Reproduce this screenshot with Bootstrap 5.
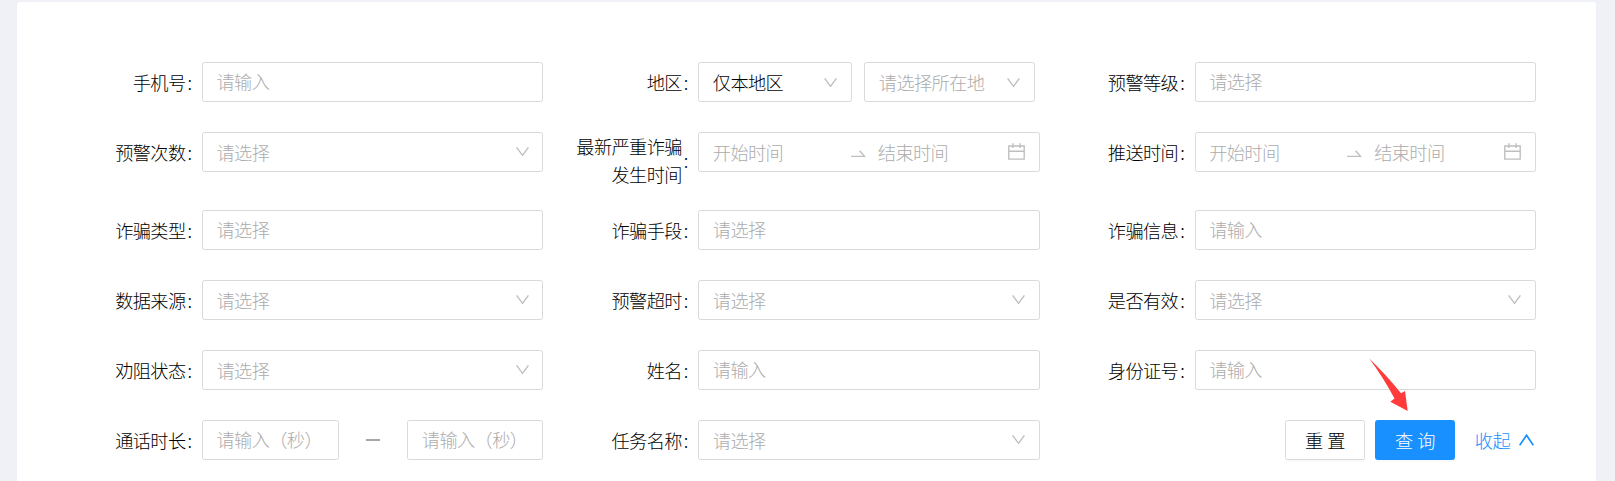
<!DOCTYPE html>
<html lang="zh-CN">
<head>
<meta charset="utf-8">
<meta name="viewport" content="width=device-width, initial-scale=1">
<title>预警查询</title>
<link href="https://cdn.jsdelivr.net/npm/bootstrap@5.3.0/dist/css/bootstrap.min.css" rel="stylesheet">
<style>
  body { background: #f0f1f6; font-family: "Noto Sans CJK SC", sans-serif; font-weight: 300; font-size: 18.2px; letter-spacing: -.6px; line-height: 28px; color: #000; overflow: hidden; }
  .panel { margin: 2px 19px 0 17px; padding: 60px 30px 0; height: 479px; border-radius: 3px 3px 0 0; }
  .search-grid { width: 1489px; row-gap: 30px; }
  .item-label { width: 155px; flex: none; height: 40px; padding-right: 8px; }
  .item-label.two-line { height: 48px; padding-top: 7px; }
  .item-label .colon { width: 8.5px; padding-left: 2px; }
  .form-control { height: 40px; padding: 0 14px 0 13.5px; border: 1px solid #d9d9d9; border-radius: 2.5px; font: inherit; color: #acacac; line-height: 37px; white-space: nowrap; }
  .form-control.chosen { color: #000; }
  .chev { width: 13px; height: 9px; flex: none; color: #bfbfbf; }
  .form-control.tall-select .chev { margin-bottom: 2px; }
  .col-start .tall-select .chev { margin-right: -1px; }
  .form-control svg, .fold svg { fill: none; stroke: currentColor; stroke-width: 1.4; }
  .w-region { width: 154px; }
  .w-place { width: 171px; }
  .date-start { width: 138px; }
  .date-arrow { width: 15px; height: 8px; margin: 4px 12px 0 0; color: #bfbfbf; }
  .cal { width: 17px; height: 17px; margin-bottom: 1px; color: #bfbfbf; }
  .w-sec { width: 137px; }
  .w-sec-end { width: 136px; }
  .tilde { width: 14px; height: 1.5px; background: #a6a6a6; }
  .btn { --bs-btn-font-size: 18.2px; --bs-btn-font-weight: 300; width: 80px; height: 40px; padding: 0; border-radius: 2.5px; line-height: 37px; letter-spacing: 4px; text-indent: 4px; box-shadow: 0 2px 0 rgba(0,0,0,.02); }
  .btn-reset { border-color: #d9d9d9; background: #fff; color: #000; }
  .btn-query { border-color: #1890ff; background: #1890ff; color: #fff; }
  .fold { color: #1890ff; margin: 0 2px 0 19.5px; }
  .fold svg { margin-left: 9px; }
  .pointer { left: 82px; top: -63px; width: 42px; height: 56px; }
</style>
</head>
<body>
<svg class="d-none">
  <symbol id="down" viewBox="0 0 13 9"><path d="M.6.4 6.5 8.3 12.4.4"/></symbol>
  <symbol id="arrow" viewBox="0 0 15 8"><path d="M0 6.4H13.6L8.6.8"/></symbol>
  <symbol id="calendar" viewBox="0 0 17 17"><path d="M.8 3H16.2V16.1H.8ZM.8 8.2H16.2M4.9.2V5M12.1.2V5"/></symbol>
</svg>
<main class="panel bg-white">
  <form class="search-grid row g-0">
    <div class="col-4 col-start d-flex">
      <div class="item-label d-flex align-items-center justify-content-end"><span>手机号</span><span class="colon">:</span></div>
      <div class="form-control">请输入</div>
    </div>
    <div class="col-4 d-flex">
      <div class="item-label d-flex align-items-center justify-content-end"><span>地区</span><span class="colon">:</span></div>
      <div class="form-control chosen w-region d-flex align-items-center justify-content-between me-2"><span>仅本地区</span><svg class="chev"><use href="#down"/></svg></div>
      <div class="form-control w-place d-flex align-items-center justify-content-between ms-1"><span>请选择所在地</span><svg class="chev"><use href="#down"/></svg></div>
    </div>
    <div class="col-4 d-flex">
      <div class="item-label d-flex align-items-center justify-content-end"><span>预警等级</span><span class="colon">:</span></div>
      <div class="form-control">请选择</div>
    </div>

    <div class="col-4 col-start d-flex">
      <div class="item-label d-flex align-items-center justify-content-end"><span>预警次数</span><span class="colon">:</span></div>
      <div class="form-control tall-select d-flex align-items-center justify-content-between"><span>请选择</span><svg class="chev"><use href="#down"/></svg></div>
    </div>
    <div class="col-4 d-flex">
      <div class="item-label two-line d-flex align-items-center justify-content-end"><span class="text-end">最新严重诈骗<br>发生时间</span><span class="colon">:</span></div>
      <div class="form-control d-flex align-items-center"><span class="date-start">开始时间</span><svg class="date-arrow"><use href="#arrow"/></svg><span>结束时间</span><svg class="cal ms-auto"><use href="#calendar"/></svg></div>
    </div>
    <div class="col-4 d-flex">
      <div class="item-label d-flex align-items-center justify-content-end"><span>推送时间</span><span class="colon">:</span></div>
      <div class="form-control d-flex align-items-center"><span class="date-start">开始时间</span><svg class="date-arrow"><use href="#arrow"/></svg><span>结束时间</span><svg class="cal ms-auto"><use href="#calendar"/></svg></div>
    </div>

    <div class="col-4 col-start d-flex">
      <div class="item-label d-flex align-items-center justify-content-end"><span>诈骗类型</span><span class="colon">:</span></div>
      <div class="form-control">请选择</div>
    </div>
    <div class="col-4 d-flex">
      <div class="item-label d-flex align-items-center justify-content-end"><span>诈骗手段</span><span class="colon">:</span></div>
      <div class="form-control">请选择</div>
    </div>
    <div class="col-4 d-flex">
      <div class="item-label d-flex align-items-center justify-content-end"><span>诈骗信息</span><span class="colon">:</span></div>
      <div class="form-control">请输入</div>
    </div>

    <div class="col-4 col-start d-flex">
      <div class="item-label d-flex align-items-center justify-content-end"><span>数据来源</span><span class="colon">:</span></div>
      <div class="form-control tall-select d-flex align-items-center justify-content-between"><span>请选择</span><svg class="chev"><use href="#down"/></svg></div>
    </div>
    <div class="col-4 d-flex">
      <div class="item-label d-flex align-items-center justify-content-end"><span>预警超时</span><span class="colon">:</span></div>
      <div class="form-control tall-select d-flex align-items-center justify-content-between"><span>请选择</span><svg class="chev"><use href="#down"/></svg></div>
    </div>
    <div class="col-4 d-flex">
      <div class="item-label d-flex align-items-center justify-content-end"><span>是否有效</span><span class="colon">:</span></div>
      <div class="form-control tall-select d-flex align-items-center justify-content-between"><span>请选择</span><svg class="chev"><use href="#down"/></svg></div>
    </div>

    <div class="col-4 col-start d-flex">
      <div class="item-label d-flex align-items-center justify-content-end"><span>劝阻状态</span><span class="colon">:</span></div>
      <div class="form-control tall-select d-flex align-items-center justify-content-between"><span>请选择</span><svg class="chev"><use href="#down"/></svg></div>
    </div>
    <div class="col-4 d-flex">
      <div class="item-label d-flex align-items-center justify-content-end"><span>姓名</span><span class="colon">:</span></div>
      <div class="form-control">请输入</div>
    </div>
    <div class="col-4 d-flex">
      <div class="item-label d-flex align-items-center justify-content-end"><span>身份证号</span><span class="colon">:</span></div>
      <div class="form-control">请输入</div>
    </div>

    <div class="col-4 col-start d-flex">
      <div class="item-label d-flex align-items-center justify-content-end"><span>通话时长</span><span class="colon">:</span></div>
      <div class="d-flex flex-grow-1 align-items-center justify-content-between">
        <div class="form-control w-sec">请输入（秒）</div><span class="tilde"></span><div class="form-control w-sec-end">请输入（秒）</div>
      </div>
    </div>
    <div class="col-4 d-flex">
      <div class="item-label d-flex align-items-center justify-content-end"><span>任务名称</span><span class="colon">:</span></div>
      <div class="form-control tall-select d-flex align-items-center justify-content-between"><span>请选择</span><svg class="chev"><use href="#down"/></svg></div>
    </div>
    <div class="col-4 d-flex align-items-center justify-content-end">
      <div class="d-flex position-relative" style="gap:10px">
        <button type="button" class="btn btn-reset">重置</button>
        <button type="button" class="btn btn-query">查询</button>
        <svg class="pointer position-absolute" viewBox="0 0 42 56" fill="#ff3b3b"><path d="M2 1.300C13 12 24 23.500 34 36.300L38 34 40.700 54 23.300 44.700 27.500 41.500Q16 20 2 1.300Z"/></svg>
      </div>
      <div class="fold d-flex align-items-center"><span>收起</span><svg width="15" height="12" viewBox="0 0 15 12"><path stroke-width="1.700" d="M.7 11.300 7.500 1.200 14.300 11.300"/></svg></div>
    </div>
  </form>
</main>
<script src="https://cdn.jsdelivr.net/npm/bootstrap@5.3.0/dist/js/bootstrap.bundle.min.js"></script>
</body>
</html>
